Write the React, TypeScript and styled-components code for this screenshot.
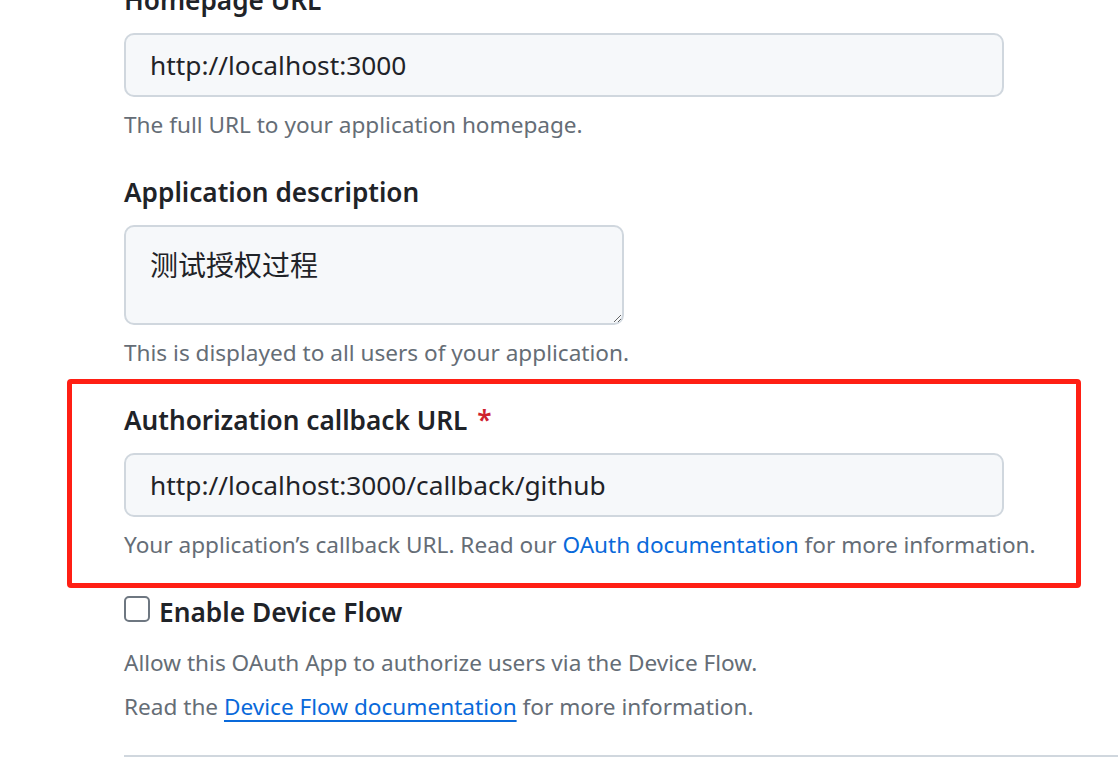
import React from "react";
import styled, { createGlobalStyle } from "styled-components";

const Global = createGlobalStyle`
  html, body { margin: 0; padding: 0; background: #ffffff; }
  body {
    font-family: "Noto Sans", "Noto Sans CJK SC", sans-serif;
    color: #1f2328;
    overflow: hidden;
  }
`;

const Page = styled.div`
  width: 1118px;
  height: 779px;
  overflow: hidden;
  box-sizing: border-box;
  padding-left: 124px;
`;

const Form = styled.div`
  margin-top: -16px;
  display: flex;
  flex-direction: column;
`;

const Field = styled.div`
  display: flex;
  flex-direction: column;
  width: 880px;
  & + & { margin-top: 33px; }
`;

const Highlight = styled.div`
  margin: 8px 0 0 -57px;
  width: 1014px;
  box-sizing: border-box;
  border: 5px solid #ff1f14;
  border-radius: 4px;
  padding: 20px 0 20px 52px;
`;

const Label = styled.label`
  font-size: 26.2px;
  font-weight: 600;
  line-height: 32px;
  margin-bottom: 17px;
  white-space: nowrap;
`;

const Required = styled.span`
  color: #cf222e;
  margin-left: 10px;
`;

const TextInput = styled.input`
  width: 880px;
  height: 64px;
  box-sizing: border-box;
  border: 2px solid #d0d7de;
  border-radius: 10px;
  background: #f6f8fa;
  padding: 0 24px;
  font-family: inherit;
  font-size: 26.3px;
  color: #1f2328;
  outline: none;
`;

const TextArea = styled.textarea`
  width: 500px;
  height: 100px;
  box-sizing: border-box;
  border: 2px solid #d0d7de;
  border-radius: 10px;
  background: #f6f8fa;
  padding: 18px 24px;
  font-family: inherit;
  font-size: 28px;
  line-height: 40px;
  color: #1f2328;
  outline: none;
  resize: vertical;
`;

const Note = styled.p`
  margin: 10px 0 0;
  font-size: 22.6px;
  line-height: 36px;
  color: #656d76;
  white-space: nowrap;
`;

const Link = styled.a<{ $underline?: boolean }>`
  color: #0969da;
  text-decoration: ${(p) => (p.$underline ? "underline" : "none")};
  text-underline-offset: 5px;
  text-decoration-thickness: 2px;
`;

const CheckRow = styled.label`
  display: flex;
  align-items: flex-start;
  gap: 9px;
  margin-top: 4px;
  font-size: 26.3px;
  font-weight: 600;
  line-height: 40px;
`;

const Box = styled.input`
  appearance: none;
  margin: 4px 0 0;
  width: 26px;
  height: 26px;
  border: 2px solid #6e7781;
  border-radius: 5px;
  background: #ffffff;
`;

const Description = styled.p<{ $top: number }>`
  margin: ${(p) => p.$top}px 0 0;
  font-size: 22.6px;
  line-height: 36px;
  color: #656d76;
  white-space: nowrap;
`;

const Divider = styled.hr`
  margin: 30px 0 0;
  border: none;
  border-top: 2px solid #d0d7de;
  width: 994px;
`;

export default function App() {
  return (
    <Page>
      <Global />
      <Form>
        <Field>
          <Label>Homepage URL</Label>
          <TextInput readOnly value="http://localhost:3000" />
          <Note>The full URL to your application homepage.</Note>
        </Field>
        <Field>
          <Label>Application description</Label>
          <TextArea readOnly value="测试授权过程" />
          <Note>This is displayed to all users of your application.</Note>
        </Field>
        <Highlight>
          <Field>
            <Label>
              Authorization callback URL<Required>*</Required>
            </Label>
            <TextInput readOnly value="http://localhost:3000/callback/github" />
            <Note>
              Your application’s callback URL. Read our{" "}
              <Link href="#">OAuth documentation</Link> for more information.
            </Note>
          </Field>
        </Highlight>
        <CheckRow>
          <Box type="checkbox" />
          Enable Device Flow
        </CheckRow>
        <Description $top={13}>
          Allow this OAuth App to authorize users via the Device Flow.
        </Description>
        <Description $top={8}>
          Read the <Link href="#" $underline>Device Flow documentation</Link> for more information.
        </Description>
        <Divider />
      </Form>
    </Page>
  );
}
